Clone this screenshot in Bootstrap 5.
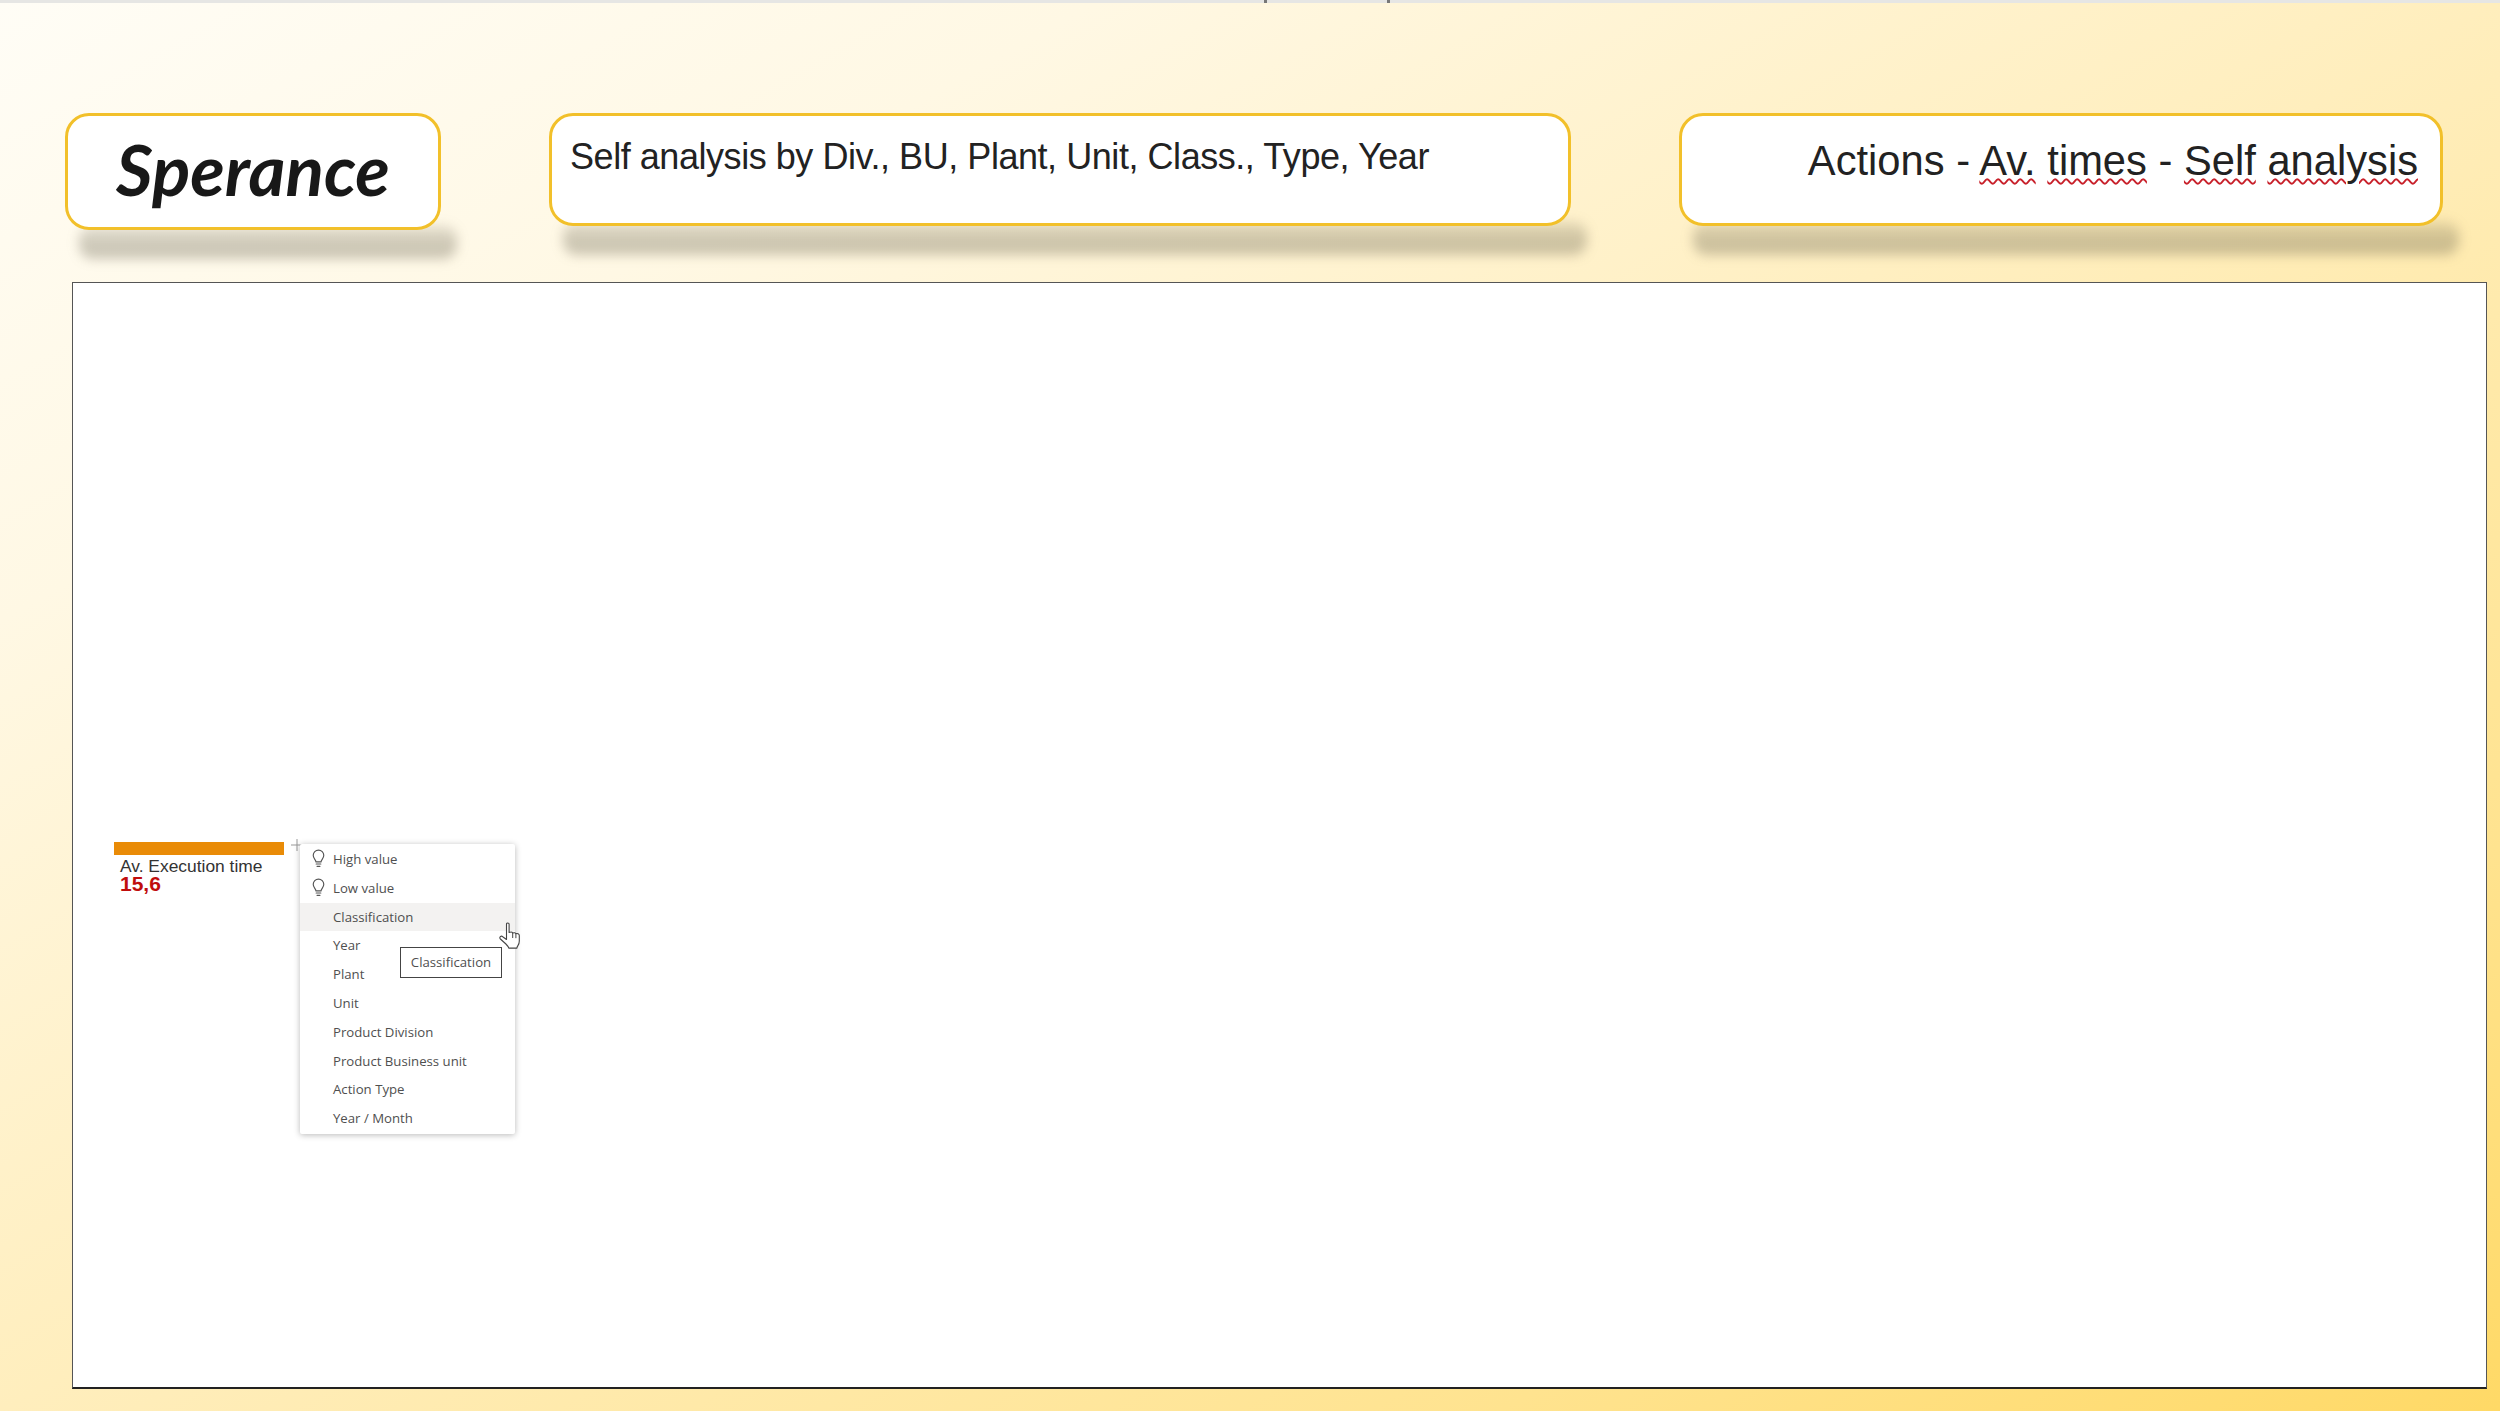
<!DOCTYPE html>
<html lang="en">
<head>
<meta charset="utf-8">
<title>Sperance</title>
<link href="https://cdn.jsdelivr.net/npm/bootstrap@5.3.0/dist/css/bootstrap.min.css" rel="stylesheet">
<style>
html,body{height:100%;}
body{background:linear-gradient(to bottom right,#fffdf6 0%,#fff8e4 22%,#ffeebd 50%,#ffe38f 80%,#ffd966 100%);font-family:"Liberation Sans",Arial,sans-serif;color:#222;overflow:hidden;}
.page-wrap{height:1411px;}
.top-strip{height:3px;background:#e6e6e4;flex:none;position:relative;}
.top-tick{position:absolute;top:0;width:3px;height:3px;background:#777;}
.tick-a{left:1264px;}
.tick-b{left:1387px;}
.head-row{flex:none;height:279px;padding:110px 0 0 65px;gap:108px;}
.head-box{position:relative;background:#fff;border:3px solid #f2c02a;border-radius:24px;height:113px;}
.head-box::after{content:"";position:absolute;z-index:-1;left:11px;right:-19px;bottom:-32px;height:34px;background:linear-gradient(to bottom,rgba(95,90,70,.12),rgba(95,90,70,.3) 50%,rgba(95,90,70,.32));filter:blur(6px);border-radius:14px;}
.box-logo{width:376px;height:117px;display:flex;justify-content:center;}
.logo-text{font-family:Lato,sans-serif;font-weight:700;font-style:italic;font-size:71px;line-height:1;color:#181818;margin-top:17px;}
.box-sub{width:1022px;padding:18px 0 0 18px;font-size:36px;letter-spacing:-.45px;line-height:46px;}
.box-title{width:764px;padding:20px 22px 0 0;text-align:right;font-size:41.7px;line-height:50px;}
.spell{text-decoration:underline wavy #c8202a 1.5px;text-underline-offset:3px;}
.frame{position:relative;flex:1 1 auto;margin:0 13px 22px 72px;background:#fff;border:1px solid #555;border-bottom:2px solid #222;padding-top:559px;padding-left:41px;}
.kpi{width:170px;}
.kpi-bar{height:13px;background:#e98b07;}
.kpi-label{font-size:17.4px;line-height:17px;padding:3px 0 0 6px;color:#333;}
.kpi-value{font-size:21px;line-height:18px;font-weight:700;color:#c00d0d;padding-left:6px;}
.plus-mark{position:absolute;left:218px;top:556px;width:12px;height:12px;}
.ctx-menu{position:absolute;left:227px;top:561px;width:215px;background:#fff;box-shadow:0 1px 6px rgba(0,0,0,.28);border-radius:2px;font-family:"Open Sans",sans-serif;font-size:13.2px;color:#4f4f4f;padding:1px 0;}
.ctx-item{height:28.8px;border:0;padding:1px 0 0 33px;display:flex;align-items:center;position:relative;background:transparent;color:#4f4f4f;}
.ctx-item.is-hover{background:#f3f2f1;}
.bulb{position:absolute;left:12px;top:4px;width:13px;height:19px;}
.tip-box{position:absolute;left:327px;top:664px;width:102px;height:31px;background:#fff;border:1.5px solid #444;font-family:"Open Sans",sans-serif;font-size:13.2px;color:#4f4f4f;display:flex;align-items:center;justify-content:center;}
.hand{position:absolute;left:426px;top:639px;width:22px;height:27px;}
</style>
</head>
<body>
<div class="page-wrap d-flex flex-column">
  <div class="top-strip"><span class="top-tick tick-a"></span><span class="top-tick tick-b"></span></div>
  <div class="head-row d-flex align-items-start">
    <div class="head-box box-logo"><span class="logo-text">Sperance</span></div>
    <div class="head-box box-sub">Self analysis by Div., BU, Plant, Unit, Class., Type, Year</div>
    <div class="head-box box-title">Actions - <span class="spell">Av.</span> <span class="spell">times</span> - <span class="spell">Self</span> <span class="spell">analysis</span></div>
  </div>
  <div class="frame">
    <div class="kpi">
      <div class="kpi-bar"></div>
      <div class="kpi-label">Av. Execution time</div>
      <div class="kpi-value">15,6</div>
    </div>
    <svg class="plus-mark" viewBox="0 0 12 12"><path d="M0 6H12M6 0V12" stroke="#999" stroke-width="1" fill="none"/></svg>
    <div class="ctx-menu list-group list-group-flush">
      <div class="list-group-item ctx-item"><svg class="bulb" viewBox="0 0 12 18"><path d="M3.6 12.2C3.4 10.2 1 9 1 6a5 5 0 0 1 10 0c0 3-2.4 4.2-2.6 6.2zM3.8 14.2h4.4M4.6 16.4h2.8" stroke="#555" stroke-width="1.1" fill="none" stroke-linecap="round" stroke-linejoin="round"/></svg>High value</div>
      <div class="list-group-item ctx-item"><svg class="bulb" viewBox="0 0 12 18"><path d="M3.6 12.2C3.4 10.2 1 9 1 6a5 5 0 0 1 10 0c0 3-2.4 4.2-2.6 6.2zM3.8 14.2h4.4M4.6 16.4h2.8" stroke="#555" stroke-width="1.1" fill="none" stroke-linecap="round" stroke-linejoin="round"/></svg>Low value</div>
      <div class="list-group-item ctx-item is-hover">Classification</div>
      <div class="list-group-item ctx-item">Year</div>
      <div class="list-group-item ctx-item">Plant</div>
      <div class="list-group-item ctx-item">Unit</div>
      <div class="list-group-item ctx-item">Product Division</div>
      <div class="list-group-item ctx-item">Product Business unit</div>
      <div class="list-group-item ctx-item">Action Type</div>
      <div class="list-group-item ctx-item">Year / Month</div>
    </div>
    <div class="tip-box">Classification</div>
    <svg class="hand" viewBox="0 0 22 27"><path d="M7.5 2.2c0-1.7 2.6-1.7 2.6 0v8.2c1.6-.6 3.2-.4 3.6.6 1.3-.6 2.8-.3 3.2.7 1.4-.5 3.4.2 3.4 1.8v5.5c0 2-.4 3.2-1.4 4.6-.6 1-1 1.7-1 2.5H9.8c-.4-1.5-1.4-2.6-2.9-4.1L1.4 17c-1.5-1.6.7-3.7 2.3-2.3l3.8 2.8z" fill="#fff" stroke="#444" stroke-width="1.1" stroke-linejoin="round"/><path d="M13.7 11v5M16.9 11.8v4.4" stroke="#444" stroke-width="1" fill="none"/></svg>
  </div>
</div>
<script src="https://cdn.jsdelivr.net/npm/bootstrap@5.3.0/dist/js/bootstrap.bundle.min.js"></script>
</body>
</html>
